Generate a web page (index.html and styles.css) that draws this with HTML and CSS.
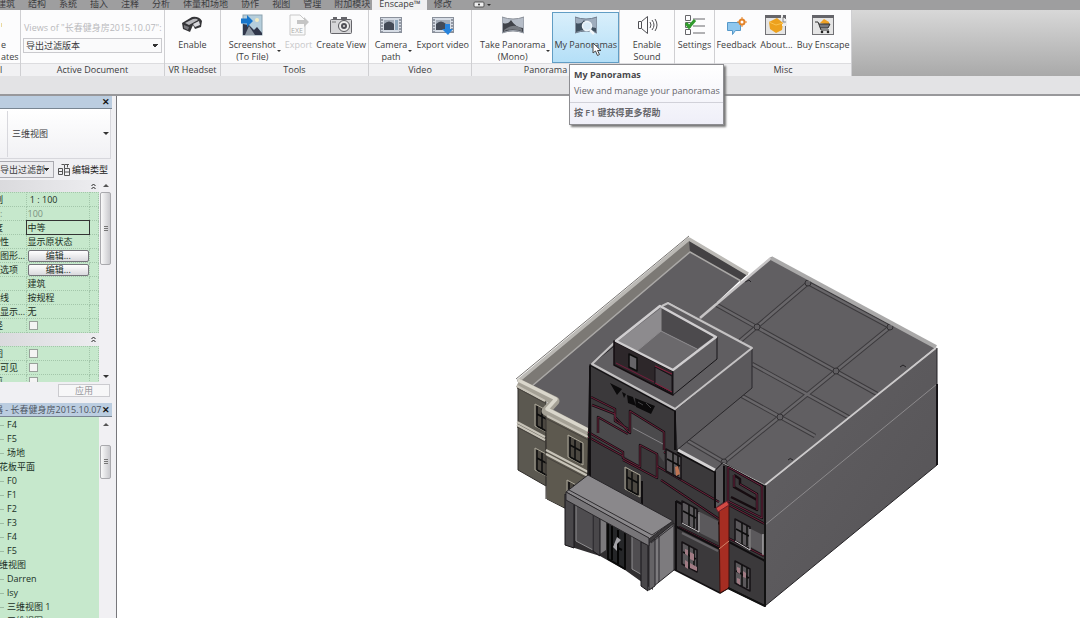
FILE: index.html
```html
<!DOCTYPE html>
<html lang="zh-CN">
<head>
<meta charset="utf-8">
<title>Enscape – 三维视图</title>
<link rel="stylesheet" href="styles.css">
</head>
<body>
<nav class="tabs">
  <a href="#">建筑</a><a href="#">结构</a><a href="#">系统</a><a href="#">插入</a><a href="#">注释</a><a href="#">分析</a><a href="#">体量和场地</a><a href="#">协作</a><a href="#">视图</a><a href="#">管理</a><a href="#">附加模块</a><a href="#" class="active">Enscape™</a><a href="#">修改</a>
  <button class="tab-toggle" aria-label="Ribbon display"><svg width="20" height="8" viewBox="0 0 20 8"><rect x="1" y="1" width="10" height="5" rx="1" fill="#eee" stroke="#555"/><circle cx="6" cy="3.500" r="1" fill="#333"/><path d="M14 3h4l-2 2z" fill="#333"/></svg></button>
</nav>

<header class="ribbon">
  <section class="panel p-tool">
    <div class="panel-body"><button class="tool edge"><svg class="ico" viewBox="0 0 22 22"><path d="M0 9h1v4h-1z" fill="#e9d9a0"/></svg><span>e<br>ates</span></button></div>
    <h2>l</h2>
  </section>
  <section class="panel p-doc">
    <div class="panel-body doc">
      <label for="views">Views of "长春健身房2015.10.07":</label>
      <select id="views"><option>导出过滤版本</option></select>
    </div>
    <h2>Active Document</h2>
  </section>
  <section class="panel p-vr">
    <div class="panel-body">
      <button class="tool"><svg class="ico" viewBox="0 0 22 22"><path d="M1 9L11 3Q18 2 21 7L20 13L14 15L12 11L9 18L2 15Z" fill="#353538"/><path d="M4 9L12 5Q16 4 17 6L8 11Z" fill="#b8b8bc"/><path d="M12 10l6-3 1 4-5 2z" fill="#d8d8dc"/><path d="M3 11l5 2-1 3-4-2z" fill="#77777c"/></svg><span>Enable</span></button>
    </div>
    <h2>VR Headset</h2>
  </section>
  <section class="panel p-tools">
    <div class="panel-body">
      <button class="tool drop"><svg class="ico" viewBox="0 0 22 22"><rect x="2" y="1" width="19" height="20" fill="#b5cedc" stroke="#8ca2af"/><path d="M2 10l6 1 5 5 3-3 5 6v2H2z" fill="#30364a"/><path d="M8 12l6 9H4z" fill="#8e99a5"/><circle cx="16" cy="6" r="2" fill="#f2ebc2"/><path d="M0 4.500h6V1l6 6-6 6V9.500H0z" fill="#1775cb"/></svg><span>Screenshot<br>(To File)</span></button>
      <button class="tool" disabled><svg class="ico" viewBox="0 0 22 22"><path d="M2 1h10l5 5v15H2z" fill="#fafafa" stroke="#c8c8c8"/><path d="M9 6h7V3l5 5-5 5v-3H9z" fill="#c5c5c5"/><text x="3" y="19" font-size="7" fill="#aaa">EXE</text></svg><span>Export</span></button>
      <button class="tool"><svg class="ico" viewBox="0 0 22 22"><rect x="0.500" y="5.500" width="21" height="14" rx="1" fill="#d6d6d8" stroke="#65656a"/><path d="M3 3h4v2H3zM11 3h6v2h-6z" fill="#66666b"/><circle cx="14" cy="12" r="5.500" fill="#eee" stroke="#55555a"/><circle cx="14" cy="12" r="3" fill="#505057"/><circle cx="14" cy="12" r="1" fill="#ddd"/><path d="M2 8h4" stroke="#777"/></svg><span>Create View</span></button>
    </div>
    <h2>Tools</h2>
  </section>
  <section class="panel p-video">
    <div class="panel-body">
      <button class="tool drop"><svg class="ico" viewBox="0 0 22 22"><rect x="0.500" y="3.500" width="21" height="15" fill="#d6dce5" stroke="#8b919c"/><path d="M2 5v13M20 5v13" stroke="#7d838f" stroke-width="1.500" stroke-dasharray="2 1"/><path d="M4 6h10v10H4z" fill="#a4adb9"/><path d="M4 10q5-5 10 0v6H4z" fill="#434a57"/><path d="M15 6h3v10h-3z" fill="#8fa8bd"/></svg><span>Camera<br>path</span></button>
      <button class="tool"><svg class="ico" viewBox="0 0 22 22"><rect x="0.500" y="3.500" width="21" height="15" fill="#d6dce5" stroke="#8b919c"/><path d="M2 5v13M20 5v13" stroke="#7d838f" stroke-width="1.500" stroke-dasharray="2 1"/><path d="M4 6h14v10H4z" fill="#a4adb9"/><path d="M4 10q5-5 10 0v6H4z" fill="#434a57"/><path d="M13 10h5v5h3l-5 6-6-6h3z" fill="#2783dc"/></svg><span>Export video</span></button>
    </div>
    <h2>Video</h2>
  </section>
  <section class="panel p-pano">
    <div class="panel-body">
      <button class="tool drop"><svg class="ico" viewBox="0 0 22 22"><path d="M0 3q11 4 22 0v16q-11-4-22 0z" fill="#b6bdc8" stroke="#8a8f98"/><path d="M1 9q5 2 8-3 4 7 12 8v4q-10-4-20 0z" fill="#40434a"/><path d="M2 16q10-8 18-1v2q-10-3-18 0z" fill="#777b82"/></svg><span>Take Panorama<br>(Mono)</span></button>
      <button class="tool hot"><svg class="ico" viewBox="0 0 22 22"><path d="M0 3q11 4 22 0v16q-11-4-22 0z" fill="#9fadbd" stroke="#707c8c"/><path d="M1 9q5 2 8-3 4 7 12 8v4q-10-4-20 0z" fill="#40505f"/><circle cx="12" cy="12" r="4.500" fill="#d8eaf6" stroke="#eef5fa" stroke-width="1.500"/><path d="M15 16l4 4" stroke="#f2f7fb" stroke-width="2.500"/></svg><span>My Panoramas</span></button>
    </div>
    <h2>Panorama</h2>
  </section>
  <section class="panel p-sound">
    <div class="panel-body">
      <button class="tool"><svg class="ico" viewBox="0 0 22 22" fill="none" stroke="#505055"><path d="M2.500 7.500h3l6-5v17l-6-5h-3zM5.500 8v6"/><path d="M14 8q2 3 0 6M16 6q4 5 0 10M19 5q4 6 0 12"/></svg><span>Enable<br>Sound</span></button>
    </div>
    <h2></h2>
  </section>
  <section class="panel p-set">
    <div class="panel-body">
      <button class="tool"><svg class="ico" viewBox="0 0 22 22" fill="none" stroke="#66666a"><path d="M1.500 1.500h5v5h-5zM1.500 8.500h5v5h-5zM1.500 15.500h5v5h-5zM9 5h12M9 12h12M9 19h12"/><path d="M2 9l3 4 6-7" stroke="#319b2d" stroke-width="3"/></svg><span>Settings</span></button>
    </div>
    <h2></h2>
  </section>
  <section class="panel p-misc">
    <div class="panel-body">
      <button class="tool"><svg class="ico" viewBox="0 0 22 22"><path d="M2.500 8.500h13v8h-5l-3 4v-4h-5z" fill="#8fc7ee" stroke="#5598c9"/><circle cx="17" cy="8" r="2.500" fill="#fff" stroke="#e38328" stroke-width="2"/><path d="M17 3v2M17 11v2M12 8h2M20 8h2" stroke="#e38328"/></svg><span>Feedback</span></button>
      <button class="tool"><svg class="ico" viewBox="0 0 22 22"><rect x="0.500" y="1.500" width="20" height="19" fill="#e5e5e5" stroke="#717175"/><path d="M0 1h21v3H0z" fill="#65656a"/><path d="M4 8l8-4 6 5-1 7-6 3-6-4z" fill="#eda11d"/><path d="M4 8l7 3 7-2" stroke="#fbc34f" fill="none"/><path d="M17 1v5h4v5h-4" fill="none" stroke="#eee" stroke-width="2"/><path d="M18 3v5h3" fill="none" stroke="#888"/></svg><span>About...</span></button>
      <button class="tool"><svg class="ico" viewBox="0 0 22 22"><rect x="0.500" y="1.500" width="21" height="19" fill="#e5e5e5" stroke="#717175"/><path d="M0 1h22v3H0z" fill="#65656a"/><path d="M8 9l4-4 5 3v3z" fill="#efa124"/><path d="M7 10h11l-2 4H8z" fill="#77777c"/><path d="M3 8h3l3 8h8M7 10h11l-2 4H8" fill="none" stroke="#333"/><circle cx="10" cy="18" r="1.300" fill="#222"/><circle cx="16" cy="18" r="1.300" fill="#222"/></svg><span>Buy Enscape</span></button>
    </div>
    <h2>Misc</h2>
  </section>
  <aside class="tip" role="tooltip">
    <strong>My Panoramas</strong>
    <p>View and manage your panoramas</p>
    <footer>按 F1 键获得更多帮助</footer>
  </aside>
  <svg class="cursor" width="10" height="15" viewBox="0 0 10 15"><path d="M1 1v10l2.500-2 2 4.500 2-1-2-4h3.500z" fill="#fff" stroke="#444"/></svg>
</header>
<div class="optbar"></div>

<main class="work">
  <aside class="side">
    <div class="bar"><button aria-label="关闭属性">✕</button></div>
    <div class="type"><i></i><span>三维视图</span><b class="dn"></b></div>
    <div class="filter">
      <select aria-label="过滤"><option>导出过滤剖</option></select>
      <button><svg width="12" height="12" viewBox="0 0 12 12" fill="none" stroke="#555"><path d="M3.500.5h3v4M.5 4.500h4v6h-4zM.5 7.500h4M6.500 4.500h5v7h-5zM6.500 8h5M9.500.500v3M7 .5h4"/></svg>编辑类型</button>
    </div>
    <div class="props">
      <div class="grid">
        <div class="group"><svg width="5" height="7" viewBox="0 0 5 7" fill="none" stroke="#222"><path d="M.5 3l2-2 2 2M.5 6l2-2 2 2"/></svg></div>
        <table>
          <tr><td class="sliver">例</td><td>&nbsp;1 : 100</td><td></td></tr>
          <tr class="dim"><td class="whole">:</td><td>100</td><td></td></tr>
          <tr><td class="sliver">度</td><td class="sel">中等</td><td></td></tr>
          <tr><td>见性</td><td>显示原状态</td><td></td></tr>
          <tr><td class="whole">图形...</td><td><button>编辑...</button></td><td></td></tr>
          <tr><td>示选项</td><td><button>编辑...</button></td><td></td></tr>
          <tr><td></td><td>建筑</td><td></td></tr>
          <tr><td>藏线</td><td>按规程</td><td></td></tr>
          <tr><td>析显示...</td><td>无</td><td></td></tr>
          <tr><td class="sliver">径</td><td><input type="checkbox" aria-label="日光路径"></td><td></td></tr>
        </table>
        <div class="group tall-group"><svg width="5" height="7" viewBox="0 0 5 7" fill="none" stroke="#222"><path d="M.5 3l2-2 2 2M.5 6l2-2 2 2"/></svg></div>
        <table>
          <tr><td class="sliver">图</td><td><input type="checkbox" aria-label="裁剪视图"></td><td></td></tr>
          <tr><td>域可见</td><td><input type="checkbox" aria-label="裁剪区域可见"></td><td></td></tr>
          <tr><td class="sliver">剪</td><td><input type="checkbox" aria-label="注释裁剪"></td><td></td></tr>
        </table>
      </div>
      <div class="scroll"><b class="up"></b><i class="thumb tall"></i><b class="dn end"></b></div>
    </div>
    <div class="apply"><button disabled>应用</button></div>
    <div class="bar browser"><span>器 - 长春健身房2015.10.07</span><button aria-label="关闭浏览器">✕</button></div>
    <div class="browse">
      <ul class="tree">
        <li>F4</li><li>F5</li><li>场地</li><li class="node">天花板平面</li>
        <li>F0</li><li>F1</li><li>F2</li><li>F3</li><li>F4</li><li>F5</li>
        <li class="node">三维视图</li><li>Darren</li><li>lsy</li><li>三维视图 1</li><li>三维视图</li>
      </ul>
      <div class="scroll"><b class="up"></b><i class="thumb short"></i></div>
    </div>
  </aside>
  <div class="canvas">
    <svg viewBox="117 96 963 522" preserveAspectRatio="xMinYMin meet" stroke-linejoin="round">
      <defs>
        <g id="win"><path d="M0 0l15 8v22l-15-8z" fill="#4b4740" stroke="#aaa698"/><path d="M2 2v20M7 5v20M13 8v20M2 10l11 6M2 22l11 6" fill="none" stroke="#0c0c0c" stroke-width="1.500"/></g>
        <g id="win2"><path d="M0 0l15 8v22l-15-8z" fill="#5b585b" stroke="#151114" stroke-width="1.500"/><path d="M7 4v21M12 7v20M1 10l13 7" fill="none" stroke="#0c0c0c" stroke-width="1.500"/></g>
        <linearGradient id="wall" x1="0" y1="0" x2="1" y2="1"><stop offset="0" stop-color="#626063"/><stop offset="1" stop-color="#555356"/></linearGradient>
      </defs>
      <!-- rear roof -->
      <path d="M517 381L689 238L748 273L700 318L600 440L588 432L546 410L556 402Z" fill="#605e61"/>
      <path d="M517 381L689 238L690 252L532 387Z" fill="#7c7975"/>
      <path d="M689 239L748 274L740 281L690 252Z" fill="#444244"/>
      <path d="M532 386L690 252L741 281" fill="none" stroke="#aaa8a6" stroke-width="1.500"/>
      <path d="M518 381L689 239L748 274" fill="none" stroke="#bbb9b5" stroke-width="3.500"/>
      <path d="M516 379L689 236" stroke="#767370" fill="none"/>
      <!-- left wing -->
      <path d="M518 386L546 400V486L518 470Z" fill="#5b5850" stroke="#2f2c29"/>
      <path d="M546 411L590 432V521L547 499Z" fill="#5d594f" stroke="#2f2c29"/>
      <use href="#win" x="535" y="404"/><use href="#win" x="535" y="448"/><use href="#win" x="568" y="435"/><use href="#win" x="567" y="480"/>
      <path d="M546 411L566 421V508L547 499Z" fill="#5d594f"/><path d="M546 411V499" stroke="#3a3733"/>
      <path d="M518 383L555 401L546 411L588 433" fill="none" stroke="#a5a196" stroke-width="9"/>
      <path d="M518 380L556 399L547 409L588 430" fill="none" stroke="#dad7cc" stroke-width="3.500"/>
      <path d="M517 386L545 401M547 416L588 437M517 422L545 437M517 425L545 440M546 450L588 472M546 454L588 476" stroke="#c7c3b8" stroke-width="2" fill="none"/>
      <path d="M517 388L545 403M547 419L588 440M517 427L545 442M546 457L588 479" stroke="#47433e" fill="none"/>
      <!-- main roof -->
      <path d="M700 318L771 257L936 347L765 486L723 463L715 471L677 450L640 400Z" fill="#615f62"/>
      <path d="M715 304L877 394M740 341L808 283L890 327L724 462M752 364L850 418M742 396L815 436M688 441L724 462" fill="none" stroke="#3c3a3d" stroke-width="4.500"/>
      <path d="M715 304L877 394M740 341L808 283L890 327L724 462M752 364L850 418M742 396L815 436M688 441L724 462" fill="none" stroke="#69676a" stroke-width="2.500"/>
      <g fill="#615f62" stroke="#323033"><circle cx="757" cy="327" r="3"/><circle cx="836" cy="371" r="3"/><circle cx="780" cy="417" r="3"/><circle cx="890" cy="327" r="3"/><circle cx="808" cy="283" r="3"/><circle cx="724" cy="462" r="3"/></g>
      <path d="M745 282l4-2 2 2M900 367l3-2 3 2M788 460q2-3 5 0" fill="none" stroke="#242225"/>
      <path d="M700 318L771 258" fill="none" stroke="#c6c4c5" stroke-width="2.500"/><path d="M771 258L936 347" fill="none" stroke="#aaa9a9" stroke-width="4"/>
      <path d="M765 486L937 348V465L765 606Z" fill="url(#wall)" stroke="#252326"/>
      <path d="M765 485L936 348" stroke="#cbc9ca" stroke-width="2"/><path d="M765 525L937 384" stroke="#8c8a8c"/>
      <path d="M937 384V465" stroke="#171518" stroke-width="2"/>
      <!-- facade -->
      <path d="M590 365L675 411L677 450L715 471L723 463L765 486V606L728 588L720 593L675 570L587 530Z" fill="#3b393b" stroke="#121012" stroke-width="1.500"/>
      <path d="M715 471L723 463V502L715 508Z" fill="#5c5a5d"/>
      <path d="M592 406L615 411L618 422L630 433V411L664 432V462L657 453L640 445V466L592 436Z" fill="#4b4a4c"/>
      <path d="M675 410L752 348V388L677 450Z" fill="#5b595c" stroke="#29272a"/>
      <path d="M591 365L668 302L752 348L675 410Z" fill="#605e61" stroke="#2b292c"/>
      <path d="M614 343L592 364L675 409L752 348L668 303L662 306" fill="none" stroke="#c4c2c3" stroke-width="2"/>
      <!-- roof box -->
      <path d="M614 341L659 305L717 337L673 371Z" fill="#676568"/>
      <path d="M661 308V331L637 351L618 341Z" fill="#8d8b8e"/><path d="M661 308L714 337L697 349L661 331Z" fill="#4c4a4d"/>
      <path d="M661 331L637 351L673 368L697 349Z" fill="#6b696c"/><path d="M661 308V331L697 349M661 331L637 351" fill="none" stroke="#8f8d90"/>
      <path d="M614 341L673 371V395L614 365Z" fill="#2d272a" stroke="#130d10" stroke-width="1.500"/>
      <path d="M673 371L717 337V359L673 395Z" fill="#5f5d60" stroke="#171518"/>
      <path d="M616 341L660 306L716 337L673 370Z" fill="none" stroke="#d0ced0" stroke-width="2.500"/>
      <path d="M616 363L654 382" fill="none" stroke="#751e3d"/>
      <path d="M629 354L637 358V371L629 367Z" fill="#666468" stroke="#0b0b0b" stroke-width="1.500"/><path d="M655 367L672 376V393L655 384Z" fill="#454246" stroke="#171014"/><path d="M655 366L672 374M655 383L672 392" stroke="#8a1c3c"/>
      <!-- sign and trim -->
      <path d="M610 383l12 6-5 6zM622 392l4 2-2 4zM627 395l6 2 3 9-8-3zM635 398l20 8-4 8-15-7z" fill="#0b0a0b"/><path d="M638 402l5 3m3-2l5 5" stroke="#434244"/>
      <g fill="none" stroke="#151013" stroke-width="2.500">
        <path id="trim" d="M591 397L615 409V417L630 433V411L664 432V450M592 405L615 414V421L628 429M628 434L598 417V433M588 432L623 452V458L640 467V445L657 454V478L623 460M588 437L623 456M657 466L719 502M664 452L679 461M661 480L719 519M679 527L719 547M728 538L764 556M729 505L765 524"/>
      </g>
      <use href="#trim" fill="none" stroke="#6b2039"/>
      <path d="M633 428L663 444" stroke="#858386"/>
      <path d="M590 366V480M675 411V450M677 452L715 472V508M724 466V503M676 501L720 524M675 526L720 549M642 481V508M676 501V570M729 542L765 561" fill="none" stroke="#100e10" stroke-width="2"/>
      <path d="M678 450L715 470" stroke="#d4d2d3" stroke-width="3"/><path d="M723 463L765 485" stroke="#a9a7a8"/>
      <path d="M728 467L762 486V518L728 501ZM734 475V487L757 500V510M734 475L740 479V484L757 494V510L731 497" fill="none" stroke="#160c10" stroke-width="2.500"/><path d="M728 467L762 486V518L728 501ZM734 475V487M740 484L757 494V510" fill="none" stroke="#6e2440"/>
      <path d="M682 533L718 551" stroke="#656366" stroke-width="2"/>
      <path d="M700 512L718 521V542L700 533ZM751 529L763 535V554L751 547Z" fill="#5b595c"/>
      <use href="#win2" x="666" y="449"/><use href="#win" x="625" y="467"/><use href="#win2" x="682" y="501"/><use href="#win2" x="682" y="542"/><use href="#win2" x="735" y="519"/><use href="#win2" x="735" y="561"/>
      <path d="M675 467l3-1 2 8-4 2z" fill="#c07555"/><path d="M685 549l3 1v6l-3-2zM690 552l4 2v7l-4-2zM685 560l3 2v7l-3-2zM690 563l7 4v4l-7-3zM737 567l3 1v6l-3-2zM737 578l3 1v6l-3-2zM743 571l3 2v5l-3-1z" fill="#a17b84"/>
      <path d="M699 512V532L682 523M750 529V550L735 541M763 534V555" fill="none" stroke="#cbc9ca"/>
      <path d="M719 510L729 503V588L720 593Z" fill="#a62d22" stroke="#3b100e"/><path d="M716 508L727 501L729 505L718 512Z" fill="#d34a43" stroke="#6e202c"/><path d="M719 549L729 541" stroke="#d38368"/>
      <path d="M765 486V606L728 588" fill="none" stroke="#111" stroke-width="2"/>
      <!-- entrance -->
      <path d="M565 494L649 540L653 590L625 570L600 556L565 545Z" fill="#312f31"/>
      <path d="M576 503L593 512V550L576 541ZM632 535L644 541V576L632 569Z" fill="#4f4d50" stroke="#8f8e90"/><path d="M600 516L606 519V550L600 554Z" fill="#7b797c"/>
      <path d="M608 521L625 530V569L608 559Z" fill="#252628" stroke="#090909" stroke-width="2"/><path d="M612 526V560M618 530V564M612 545L622 550" stroke="#050505" stroke-width="2"/><path d="M617 537l4 3-4 4v7l-4-4z" fill="#a4a3a8"/>
      <path d="M565 494V545L574 548V501ZM593 511V551L600 556V516ZM641 542V586L648 591V545Z" fill="#49474a" stroke="#19171a"/>
      <path d="M653 540L674 523V570L649 590Z" fill="#7d7b7e" stroke="#242225"/><path d="M649 543L655 539V586L649 590ZM659 536V582" fill="#656366" stroke="#29272a"/>
      <path d="M588 475L673 521L649 539L566 492Z" fill="#8a888b" stroke="#29272a"/><path d="M566 492L649 538V546L566 500Z" fill="#777578" stroke="#29272a"/><path d="M569 490L652 535L673 521V526L651 543" fill="none" stroke="#302e31"/>
    </svg>
  </div>
</main>
</body>
</html>
```

FILE: styles.css
```css
* { box-sizing: border-box; }
body {
  margin: 0; height: 100vh; overflow: hidden;
  display: flex; flex-direction: column;
  background: #fff; color: #3c3c40;
  font: 9px/12px "Open Sans", "Noto Sans CJK SC", sans-serif;
}
button, select, input { font: inherit; color: inherit; margin: 0; }
button { border: 0; padding: 0; background: none; }
a { color: inherit; text-decoration: none; }

.tabs { flex: none; display: flex; align-items: flex-end; height: 10px; overflow: hidden; background: #9e9e9f; padding-left: 8px; }
.tabs a { flex: none; padding: 0 6px 0 7px; line-height: 12px; white-space: nowrap; }
.tabs a:first-child { margin-left: -18px; }
.tabs .active { background: #f0f0f1; margin-left: -4px; }
.tab-toggle { height: 10px; margin-left: 15px; }
.tab-toggle svg { display: block; }

.ribbon { flex: none; position: relative; display: flex; height: 66px; background: linear-gradient(#d8d8d8, #a9a9a9); }
.panel { flex: none; display: flex; flex-direction: column; background: #fcfcfd; border-right: 1px solid #cfcfd2; }
.panel-body { flex: 1; display: flex; justify-content: center; min-height: 0; padding-top: 2px; }
.panel h2 { height: 13px; margin: 0; border-top: 1px solid #dcdcdf; background: #f1f1f3; font-size: 9px; font-weight: 400; line-height: 12px; text-align: center; white-space: nowrap; }
.p-tool { width: 21px; }
.p-doc { width: 144px; }
.p-vr { width: 56px; }
.p-tools { width: 148px; }
.p-video { width: 103px; }
.p-pano { width: 148px; }
.p-sound { width: 55px; }
.p-set { width: 40px; }
.p-misc { width: 137px; }
.p-tool h2 { text-align: left; }
.p-tools .panel-body, .p-video .panel-body, .p-pano .panel-body { justify-content: flex-end; }

.tool { position: relative; flex: none; display: flex; flex-direction: column; align-items: center; height: 51px; padding: 1px 1px 0; border: 1px solid transparent; white-space: nowrap; text-align: center; }
.tool:disabled { color: #c8c8ca; }
.ico { width: 22px; height: 22px; flex: none; margin-bottom: 3px; }
.drop { padding-right: 6px; }
.drop::after { content: ""; position: absolute; right: 1px; bottom: 10px; border: 2px solid transparent; border-top-color: #333; border-bottom: 0; }
.hot { border-color: #619dc4; background: linear-gradient(#d9effb, #b4dff7); }
.p-tool .panel-body { justify-content: flex-start; }
.edge { padding: 1px 0 0; align-items: flex-start; text-align: left; }
.doc { flex-direction: column; justify-content: flex-start; padding: 12px 2px 0; }
.doc label { color: #b9b9bc; padding-left: 1px; white-space: nowrap; }
select { appearance: none; border: 1px solid #cacace; border-radius: 0; background: linear-gradient(45deg, transparent 50%, #333 50%) no-repeat right 6px center / 3px 3px, linear-gradient(-45deg, transparent 50%, #333 50%) no-repeat right 3px center / 3px 3px, #fafafb; padding: 0 2px; }
.doc select { height: 15px; margin-top: 4px; line-height: 12px; }

.tip { position: absolute; z-index: 3; left: 569px; top: 54px; width: 155px; height: 61px; background: linear-gradient(#fff, #efeff8); border: 1px solid #8d8d91; box-shadow: 2px 2px 2px #777; padding: 4px 4px 0; white-space: nowrap; color: #66666b; }
.tip strong { display: block; color: #47474b; }
.tip p { margin: 4px 0 5px; }
.tip footer { margin: 0 -4px; padding: 4px 4px; border-top: 1px solid #d1d1d9; font-weight: 600; }
.cursor { position: absolute; z-index: 4; left: 592px; top: 32px; }
.optbar { flex: none; height: 20px; background: #e3e3e5; border-bottom: 2px solid #98989b; }

.work { flex: 1; display: flex; min-height: 0; }
.side { flex: none; width: 117px; display: flex; flex-direction: column; background: #f0f0f3; border-right: 1px solid #77777b; padding-right: 4px; overflow: hidden; }
.bar { flex: none; display: flex; align-items: center; justify-content: flex-end; height: 13px; background: #bbcde0; border-bottom: 1px solid #788592; padding-right: 2px; }
.bar button { width: 9px; font-size: 9px; font-weight: 700; color: #161616; }
.type { flex: none; display: flex; align-items: center; height: 50px; margin-right: 1px; background: linear-gradient(#fff, #f1f1f4); border: 1px solid #d7d7dc; border-width: 0 1px 1px 0; padding-right: 1px; }
.type i { width: 8px; height: 46px; border-right: 1px solid #d8d8dd; margin-right: 4px; }
.type span { flex: 1; }
.dn, .up { border: 3px solid transparent; border-top-color: #333; border-bottom: 0; }
.up { border-top: 0; border-bottom: 3px solid #555; }
.filter { flex: none; display: flex; align-items: center; gap: 4px; height: 21px; }
.filter select { width: 54px; height: 17px; padding: 0; border-color: #aaaab0; border-left: 0; background-color: #ececef; }
.filter button { display: flex; align-items: center; gap: 2px; white-space: nowrap; color: #222; }
.props { flex: none; display: flex; height: 202px; }
.grid { flex: 1; min-width: 0; overflow: hidden; }
.group { display: flex; align-items: center; justify-content: flex-end; height: 12px; padding-right: 3px; background: linear-gradient(90deg, #dadadd, #ededf0); }
.tall-group { height: 13px; }
table { width: 100%; table-layout: fixed; border-collapse: collapse; background: #c6e8cc; }
td { height: 14px; padding: 0 0 0 1px; border: 1px dotted #a3c6aa; border-left: 0; line-height: 12px; white-space: nowrap; overflow: hidden; color: #223026; }
td:first-child { width: 26px; padding: 0; text-indent: -9px; }
td.sliver:first-child { text-indent: -6px; }
td.whole:first-child { text-indent: 0; }
td:last-child { width: 9px; }
.dim td { color: #7b9281; }
td.sel { border: 1px solid #333; }
td button { display: block; width: 100%; height: 12px; border: 1px solid #74747a; border-radius: 2px; background: linear-gradient(#fff, #d9d9dd); line-height: 10px; }
td input { appearance: none; display: block; width: 9px; height: 9px; margin-left: 1px; border: 1px solid #98a09a; background: #f4f4f4; }
.scroll { flex: none; width: 13px; display: flex; flex-direction: column; align-items: center; gap: 5px; background: #f1f0f3; padding-top: 4px; }
.thumb { width: 11px; border: 1px solid #a9a9ad; border-radius: 2px; background: linear-gradient(90deg, #fafafa, #c9c9cd); display: flex; align-items: center; justify-content: center; }
.thumb::before { content: ""; width: 4px; height: 6px; background: repeating-linear-gradient(#777 0 1px, transparent 1px 2px); }
.tall { height: 73px; }
.end { margin: auto 0 4px; }
.apply { flex: none; display: flex; justify-content: flex-end; height: 21px; padding: 2px 2px 6px 0; }
.apply button { width: 52px; border: 1px solid #cbcbcf; background: #f7f7f8; color: #98989d; line-height: 11px; }
.browser { height: 14px; justify-content: space-between; white-space: nowrap; color: #4d5560; }
.browser span { width: 98px; margin-left: -6px; }
.browse { flex: 1; display: flex; min-height: 0; }
.tree { flex: 1; margin: 0; padding: 1px 0 0; list-style: none; background: #c6e8cc; overflow: hidden; color: #203025; }
.tree li { height: 14px; line-height: 14px; padding-left: 7px; white-space: nowrap; background: linear-gradient(#9dbba3, #9dbba3) no-repeat 0 7px / 4px 1px; }
.tree .node { padding: 0; text-indent: -10px; background: none; }
.browse .scroll { gap: 19px; padding-top: 6px; }
.short { height: 34px; }

.canvas { flex: 1; min-width: 0; overflow: hidden; background: #fff; }
.canvas svg { display: block; width: 100%; }
```
